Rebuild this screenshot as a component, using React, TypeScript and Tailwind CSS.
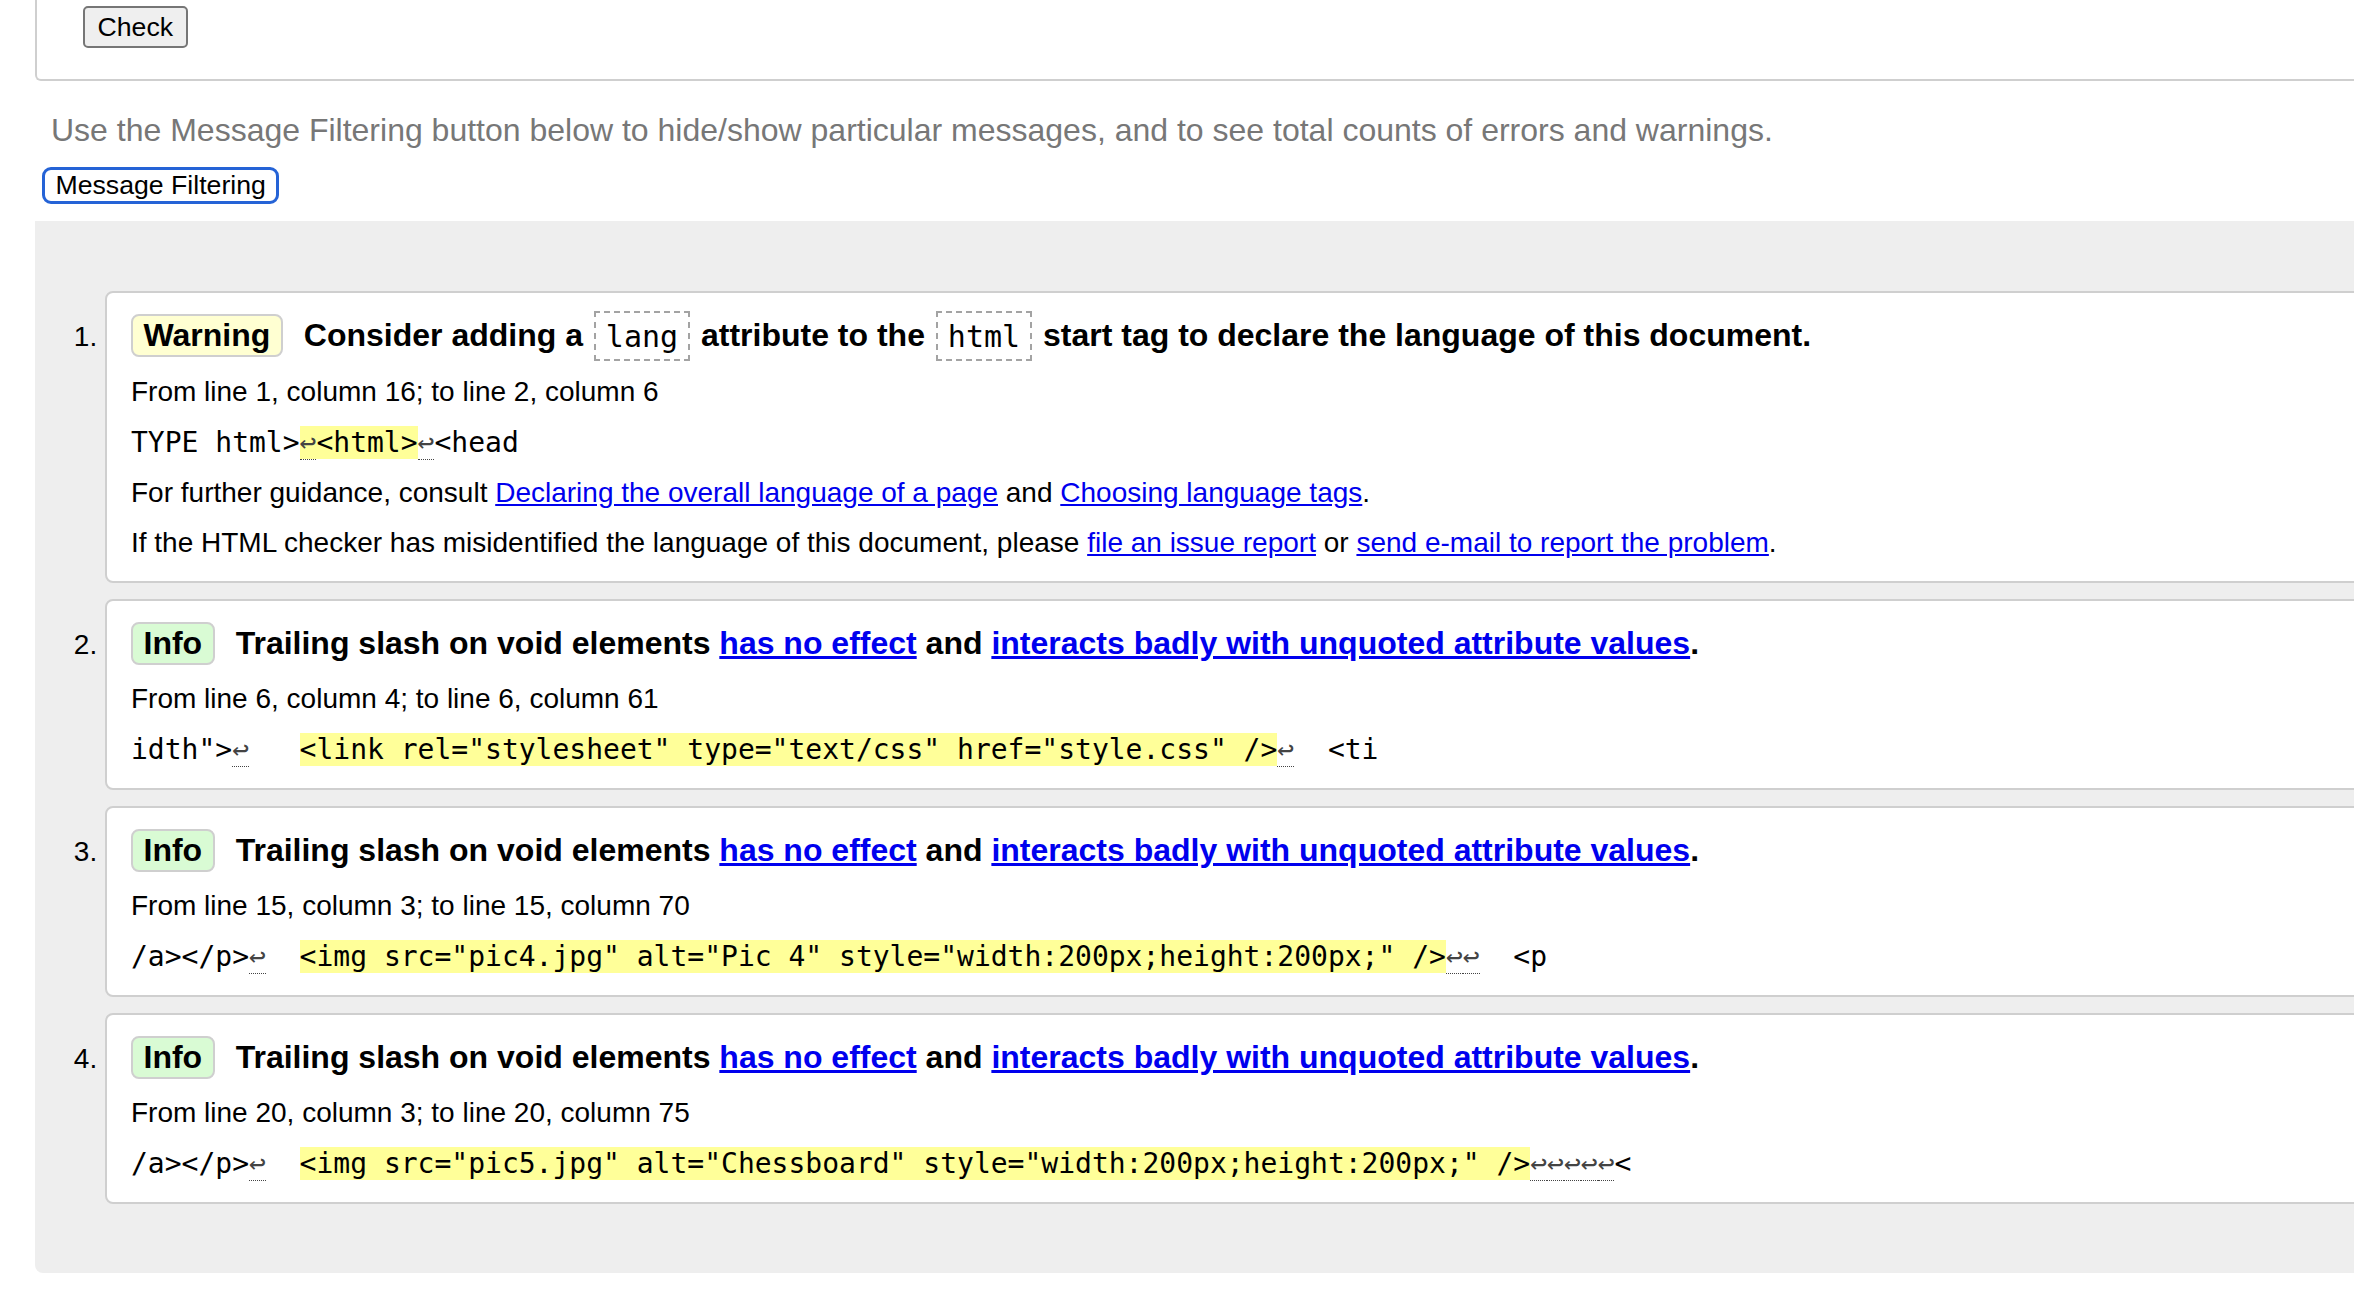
const SANS = "font-['Liberation_Sans',Arial,Helvetica,sans-serif]";
const MONO = "font-['DejaVu_Sans_Mono','Liberation_Mono',monospace]";

// line-break marker shown inside source extracts
function Lf() {
  return (
    <b className="border-b border-dotted border-[#444] font-normal text-[#444]">
      ↩
    </b>
  );
}

function Mark({ children }: { children: React.ReactNode }) {
  return <mark className="bg-[#ffff99] text-black">{children}</mark>;
}

function Badge({ kind }: { kind: "Warning" | "Info" }) {
  const bg = kind === "Warning" ? "bg-[#ffffd2]" : "bg-[#d9fbd4]";
  return (
    <span
      className={`mr-[21px] inline-block rounded-[8px] border-2 border-[#cfcfcf] px-[10.5px] py-[2px] leading-[35px] ${bg}`}
    >
      {kind}
    </span>
  );
}

function Code({ children }: { children: React.ReactNode }) {
  return (
    <code
      className={`${MONO} mx-[2px] border-2 border-dashed border-[#a3a3a3] px-[10px] py-[5.5px] text-[30px] font-normal`}
    >
      {children}
    </code>
  );
}

function Link({ children }: { children: React.ReactNode }) {
  return (
    <a href="#" className="text-[#0000ee] underline">
      {children}
    </a>
  );
}

function Card({ children }: { children: React.ReactNode }) {
  return (
    <li className="rounded-[8px] border-2 border-[#cfcfcf] bg-white pt-[20px] pb-[22px] pl-[24px]">
      {children}
    </li>
  );
}

function Heading({ children }: { children: React.ReactNode }) {
  return <p className="text-[32px] font-bold leading-[44px]">{children}</p>;
}

function Location({ children }: { children: React.ReactNode }) {
  return <p className="mt-[18px] leading-[32px]">{children}</p>;
}

function Extract({ children }: { children: React.ReactNode }) {
  return (
    <p className={`${MONO} mt-[19px] whitespace-pre leading-[32px]`}>
      {children}
    </p>
  );
}

function SlashHeading() {
  return (
    <Heading>
      <Badge kind="Info" />
      Trailing slash on void elements <Link>has no effect</Link> and{" "}
      <Link>interacts badly with unquoted attribute values</Link>.
    </Heading>
  );
}

export default function App() {
  return (
    <div className={`${SANS} h-screen w-screen overflow-hidden bg-white text-black`}>
      <div className="w-[2700px] pl-[35px]">
        <div className="h-[81px] rounded-bl-[6px] border-b-2 border-l-2 border-[#cfcfcf] pt-[6px] pl-[46px]">
          <button className="h-[42px] rounded-[5px] border-2 border-[#767676] bg-[#efefef] px-[12.5px] text-[26.67px] leading-none">
            Check
          </button>
        </div>

        <p className="mt-[31px] pl-[16px] text-[32px] leading-[37px] text-[#777]">
          Use the Message Filtering button below to hide/show particular
          messages, and to see total counts of errors and warnings.
        </p>
        <div className="mt-[18px] pl-[7px]">
          <button className="h-[37px] rounded-[9px] border-[3px] border-[#2563d6] bg-white px-[10.5px] text-[26.67px] leading-[31px]">
            Message Filtering
          </button>
        </div>

        <div className="mt-[17px] rounded-bl-[8px] bg-[#eeeeee] pt-[70px] pb-[69px] pl-[70px]">
          <ol className="flex list-decimal flex-col gap-[16px] text-[28px]">
            <Card>
              <Heading>
                <Badge kind="Warning" />
                Consider adding a <Code>lang</Code> attribute to the{" "}
                <Code>html</Code> start tag to declare the language of this
                document.
              </Heading>
              <Location>From line 1, column 16; to line 2, column 6</Location>
              <Extract>
                {"TYPE html>"}
                <Mark>
                  <Lf />
                  {"<html>"}
                </Mark>
                <Lf />
                {"<head"}
              </Extract>
              <p className="mt-[18px] leading-[32px]">
                For further guidance, consult{" "}
                <Link>Declaring the overall language of a page</Link> and{" "}
                <Link>Choosing language tags</Link>.
              </p>
              <p className="mt-[18px] leading-[32px]">
                If the HTML checker has misidentified the language of this
                document, please <Link>file an issue report</Link> or{" "}
                <Link>send e-mail to report the problem</Link>.
              </p>
            </Card>

            <Card>
              <SlashHeading />
              <Location>From line 6, column 4; to line 6, column 61</Location>
              <Extract>
                {'idth">'}
                <Lf />
                {"   "}
                <Mark>
                  {'<link rel="stylesheet" type="text/css" href="style.css" />'}
                </Mark>
                <Lf />
                {"  <ti"}
              </Extract>
            </Card>

            <Card>
              <SlashHeading />
              <Location>From line 15, column 3; to line 15, column 70</Location>
              <Extract>
                {"/a></p>"}
                <Lf />
                {"  "}
                <Mark>
                  {'<img src="pic4.jpg" alt="Pic 4" style="width:200px;height:200px;" />'}
                </Mark>
                <Lf />
                <Lf />
                {"  <p"}
              </Extract>
            </Card>

            <Card>
              <SlashHeading />
              <Location>From line 20, column 3; to line 20, column 75</Location>
              <Extract>
                {"/a></p>"}
                <Lf />
                {"  "}
                <Mark>
                  {'<img src="pic5.jpg" alt="Chessboard" style="width:200px;height:200px;" />'}
                </Mark>
                <Lf />
                <Lf />
                <Lf />
                <Lf />
                <Lf />
                {"<"}
              </Extract>
            </Card>
          </ol>
        </div>
      </div>
    </div>
  );
}
